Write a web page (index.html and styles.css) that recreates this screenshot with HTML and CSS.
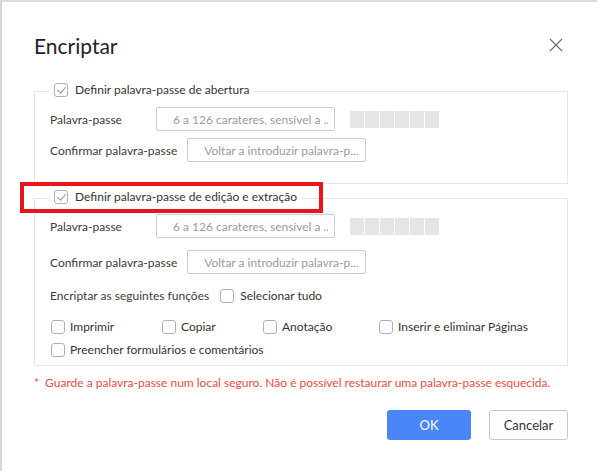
FILE: index.html
```html
<!DOCTYPE html>
<html lang="pt">
<head>
    <meta charset="UTF-8">
    <title>Encriptar</title>
    <link rel="stylesheet" href="styles.css">
</head>
<body>

<div class="window">
    <div class="dialog">
        <div class="dialog-header">
            <h1>Encriptar</h1>
            <button class="close-btn" aria-label="Fechar">
                <svg width="14" height="14" viewBox="0 0 14 14">
                    <path d="M1 1 L13 13 M13 1 L1 13" stroke="#6b6b6b" stroke-width="1.1" fill="none"/>
                </svg>
            </button>
        </div>

        <fieldset class="group group-open">
            <legend>
                <label class="check">
                    <span class="box checked"></span>
                    Definir palavra-passe de abertura
                </label>
            </legend>
            <div class="row">
                <span class="label pw-label">Palavra-passe</span>
                <input class="pw-input" type="password" placeholder="6 a 126 carateres, sensível a ...">
                <div class="strength">
                    <span></span><span></span><span></span><span></span><span></span><span></span>
                </div>
            </div>
            <div class="row">
                <span class="label confirm-label">Confirmar palavra-passe</span>
                <input class="pw-input" type="password" placeholder="Voltar a introduzir palavra-p...">
            </div>
        </fieldset>

        <fieldset class="group group-edit">
            <legend>
                <label class="check">
                    <span class="box checked"></span>
                    Definir palavra-passe de edição e extração
                </label>
            </legend>
            <div class="row">
                <span class="label pw-label">Palavra-passe</span>
                <input class="pw-input" type="password" placeholder="6 a 126 carateres, sensível a ...">
                <div class="strength">
                    <span></span><span></span><span></span><span></span><span></span><span></span>
                </div>
            </div>
            <div class="row row-confirm">
                <span class="label confirm-label">Confirmar palavra-passe</span>
                <input class="pw-input" type="password" placeholder="Voltar a introduzir palavra-p...">
            </div>

            <div class="functions">
                <span class="label">Encriptar as seguintes funções</span>
                <label class="check"><span class="box"></span>Selecionar tudo</label>
            </div>

            <div class="options">
                <label class="check"><span class="box"></span>Imprimir</label>
                <label class="check"><span class="box"></span>Copiar</label>
                <label class="check"><span class="box"></span>Anotação</label>
                <label class="check"><span class="box"></span>Inserir e eliminar Páginas</label>
                <label class="check wide"><span class="box"></span>Preencher formulários e comentários</label>
            </div>
        </fieldset>

        <p class="note"><span class="star">*</span>Guarde a palavra-passe num local seguro. Não é possível restaurar uma palavra-passe esquecida.</p>

        <div class="buttons">
            <button class="ok-button">OK</button>
            <button class="cancel-button">Cancelar</button>
        </div>

        <!-- highlight drawn over the second group's title -->
        <div class="highlight"></div>
    </div>
</div>

</body>
</html>
```

FILE: styles.css
```css
* {
    margin: 0;
    padding: 0;
    box-sizing: border-box;
    font-family: Lato, "Noto Sans", sans-serif;
}
body {
    width: 597px;
    height: 471px;
    background: #fff;
    overflow: hidden;
}
.window {
    height: 471px;
    border-top: 2px solid #dcdcdc;
    border-left: 2px solid #d6d6d6;
}
.dialog {
    position: relative;
    padding: 0 29px 0 32px;
    color: #3a3a3a;
    font-size: 12px;
}

.dialog-header {
    display: flex;
    align-items: center;
    justify-content: space-between;
    padding-top: 18px;
    height: 70px;
}
.dialog-header h1 {
    font-size: 21px;
    font-weight: normal;
    color: #222;
    line-height: 26px;
}
.close-btn {
    background: none;
    border: none;
    width: 14px;
    height: 14px;
    margin-right: 5px;
    margin-top: -2px;
    cursor: pointer;
}

/* groups */
.group {
    border: 1px solid #e6e6e6;
    padding: 0 15px 21px 15px;
}
.group legend {
    padding: 0 4px;
    line-height: 16px;
}
.group-open {
    margin-top: 10px;
}
.group-edit {
    margin-top: 5px;
    padding-bottom: 8px;
}

.check {
    display: inline-flex;
    align-items: center;
    color: #333;
    cursor: pointer;
}
.box {
    width: 14px;
    height: 14px;
    border: 1px solid #aab1c0;
    border-radius: 3px;
    margin-right: 7px;
    background: #fff;
    position: relative;
}
.box.checked::after {
    content: "";
    position: absolute;
    left: 4px;
    top: 1px;
    width: 4px;
    height: 7px;
    border-right: 1.3px solid #8c94a6;
    border-bottom: 1.3px solid #8c94a6;
    transform: rotate(40deg);
}

.row {
    display: flex;
    align-items: center;
    margin-top: 7px;
}
.group .row:first-of-type {
    margin-top: 6px;
}
.row-confirm {
    margin-top: 12px;
}
.label {
    color: #3c3c3c;
}
.pw-label {
    width: 106px;
}
.confirm-label {
    margin-right: 10px;
}
.pw-input {
    width: 179px;
    height: 24px;
    border: 1px solid #c9cdd5;
    border-radius: 2px;
    padding: 0 6px 0 16px;
    font-size: 12px;
    color: #333;
    outline: none;
}
.pw-input::placeholder {
    color: #9b9b9b;
}
.strength {
    display: flex;
    gap: 1px;
    margin-left: 15px;
}
.strength span {
    width: 14px;
    height: 17px;
    background: #e5e5e5;
}

.functions {
    display: flex;
    align-items: center;
    margin-top: 14px;
}
.functions .check {
    margin-left: 11px;
}
.functions .box {
    margin-right: 6px;
}

.options {
    display: grid;
    grid-template-columns: 111px 101px 116px auto;
    row-gap: 8px;
    margin-top: 16px;
    margin-left: 1px;
}
.options .box {
    margin-right: 5px;
}
.options .wide {
    grid-column: 1 / 5;
}

.note {
    color: #f04a4a;
    margin-top: 9px;
    line-height: 16px;
}
.note .star {
    margin-right: 6px;
}

.buttons {
    display: flex;
    justify-content: flex-end;
    gap: 18px;
    margin-top: 19px;
}
.ok-button, .cancel-button {
    height: 30px;
    font-size: 13px;
    border-radius: 3px;
    cursor: pointer;
}
.ok-button {
    width: 84px;
    background: #4a86f7;
    color: #fff;
    border: none;
}
.cancel-button {
    width: 79px;
    background: #fff;
    color: #333;
    border: 1px solid #c3c8d1;
}

.highlight {
    position: absolute;
    left: 18px;
    top: 180px;
    width: 303px;
    height: 31px;
    border: 4px solid #e8141e;
}
```
